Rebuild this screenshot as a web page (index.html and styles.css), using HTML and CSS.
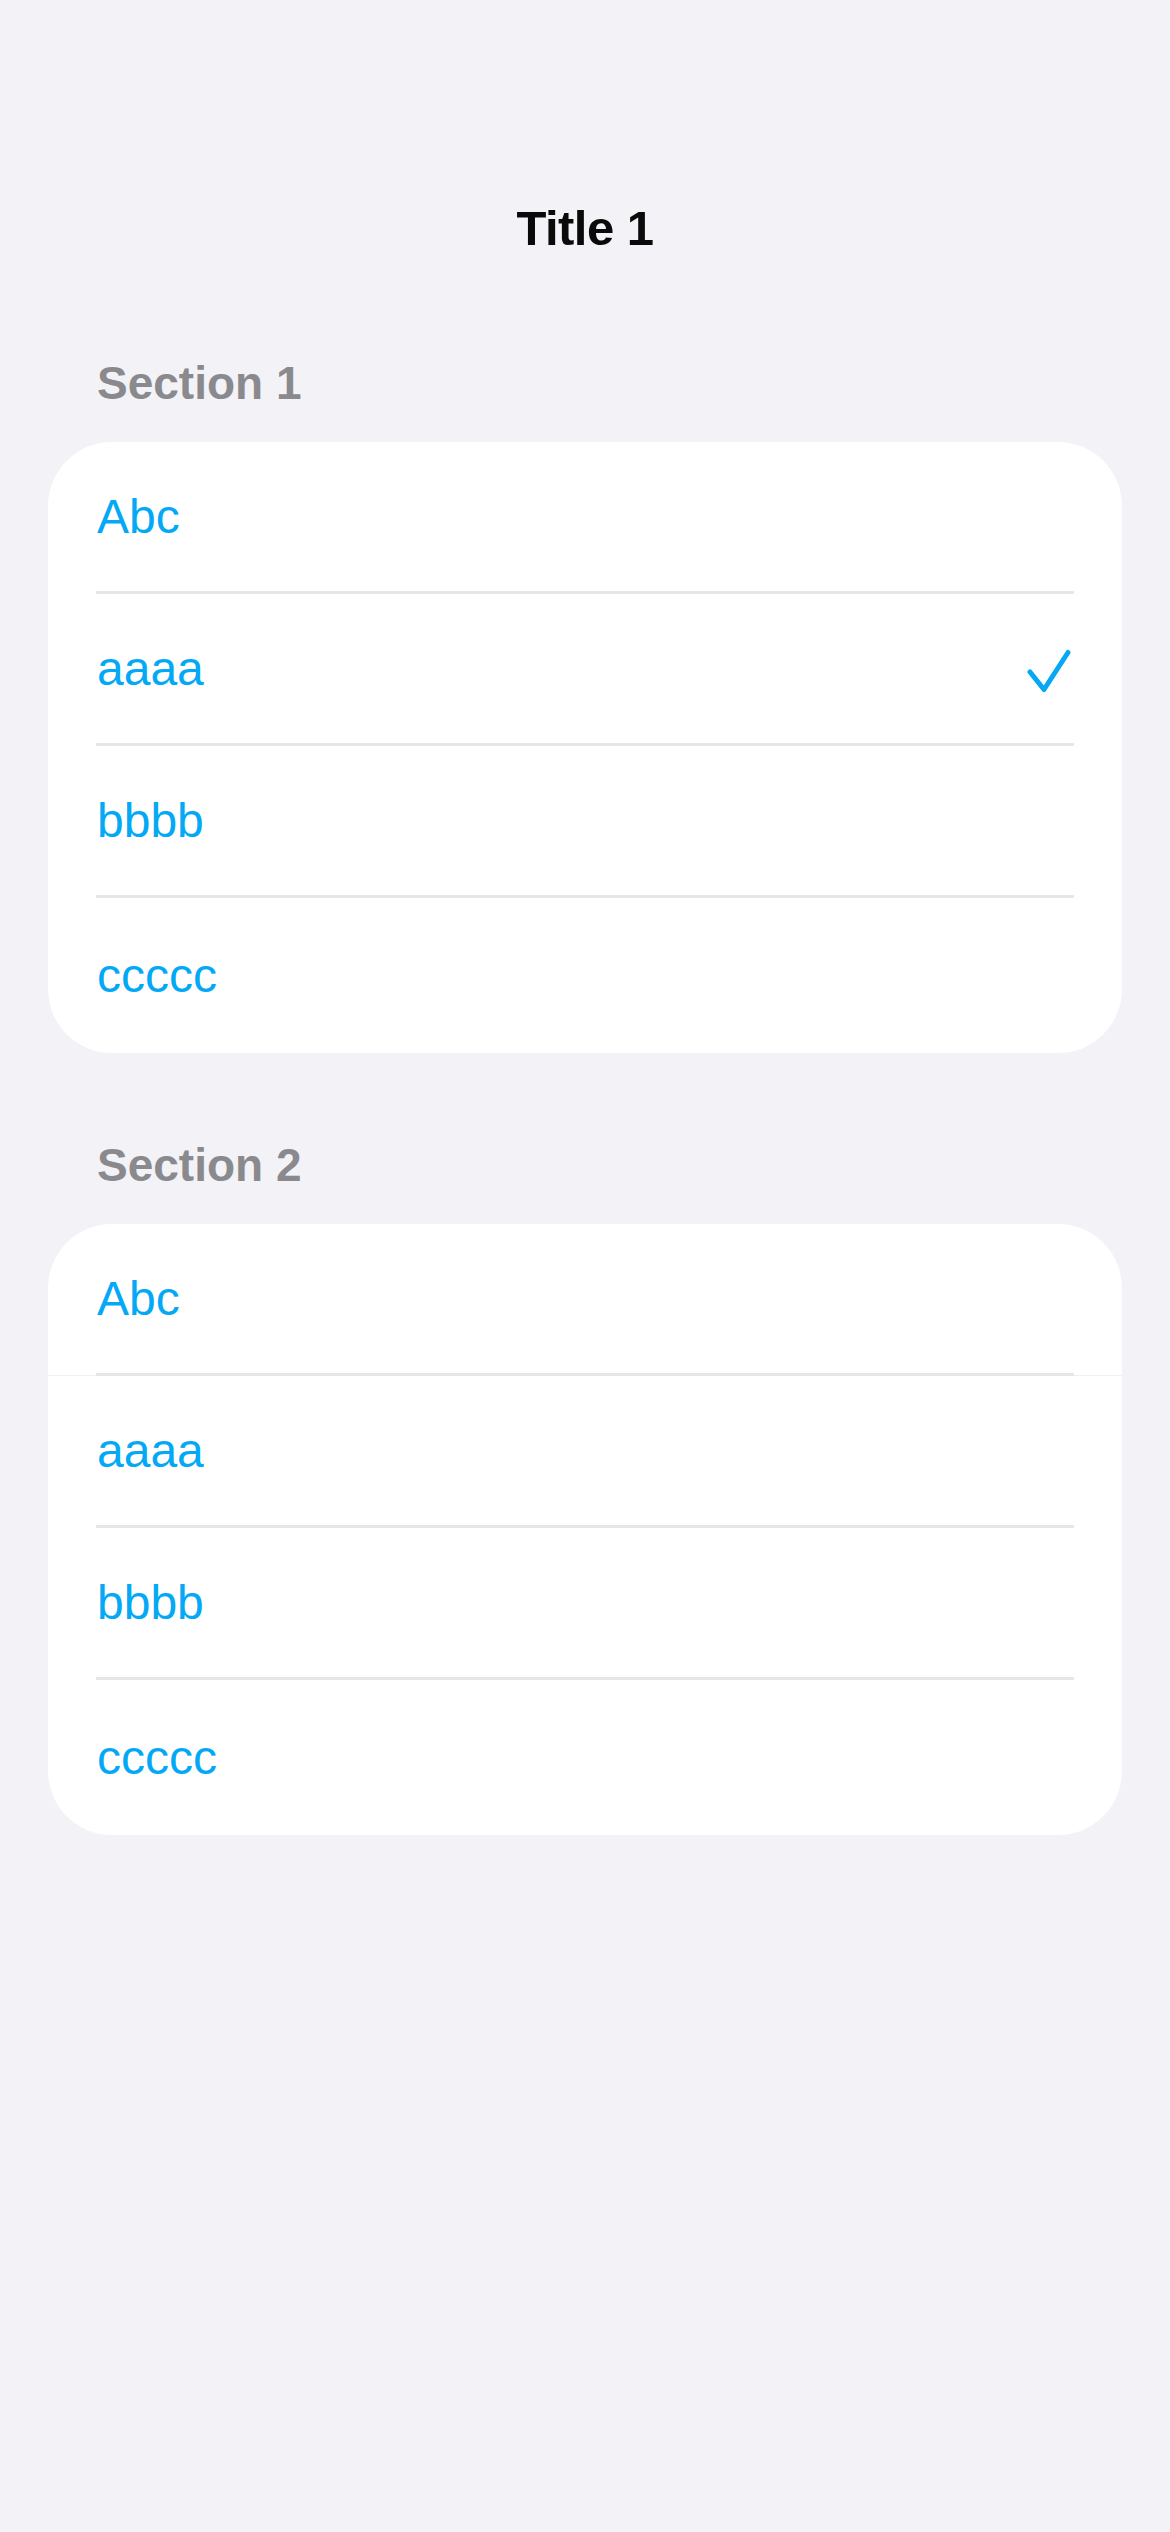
FILE: index.html
```html
<!DOCTYPE html>
<html lang="en">
<head>
<meta charset="utf-8">
<title>Title 1</title>
<link rel="stylesheet" href="styles.css">
</head>
<body>
<div class="screen">
  <header class="nav">
    <h1 class="nav-title">Title 1</h1>
  </header>

  <section class="group">
    <h2 class="group-header">Section 1</h2>
    <div class="card">
      <div class="row"><div class="row-inner"><span class="label">Abc</span></div></div>
      <div class="row"><div class="row-inner"><span class="label">aaaa</span>
        <svg class="check" width="50" height="48" viewBox="0 0 50 48" aria-hidden="true"><polyline points="6,27 20,44.5 44,7.5" fill="none" stroke="#03A9F4" stroke-width="5" stroke-linecap="round" stroke-linejoin="round"/></svg>
      </div></div>
      <div class="row"><div class="row-inner"><span class="label">bbbb</span></div></div>
      <div class="row"><div class="row-inner"><span class="label">ccccc</span></div></div>
    </div>
  </section>

  <section class="group">
    <h2 class="group-header">Section 2</h2>
    <div class="card">
      <div class="row pinned"><div class="row-inner"><span class="label">Abc</span></div></div>
      <div class="row"><div class="row-inner"><span class="label">aaaa</span></div></div>
      <div class="row"><div class="row-inner"><span class="label">bbbb</span></div></div>
      <div class="row"><div class="row-inner"><span class="label">ccccc</span></div></div>
    </div>
  </section>
</div>
</body>
</html>
```

FILE: styles.css
```css
html, body {
  margin: 0;
  padding: 0;
  background: #F2F2F7;
}

body {
  font-family: "Liberation Sans", Arial, sans-serif;
  min-height: 2532px;
}

.screen {
  display: flex;
  flex-direction: column;
  padding: 198px 48px 0 48px;
}

.nav {
  display: flex;
  justify-content: center;
}

.nav-title {
  margin: 0;
  font-size: 49px;
  line-height: 60px;
  font-weight: 700;
  letter-spacing: -0.5px;
  color: #0a0a0a;
}

.group {
  display: flex;
  flex-direction: column;
}

.group:first-of-type {
  margin-top: 97px;
}

.group + .group {
  margin-top: 84px;
}

.group-header {
  margin: 0 0 31px 0;
  padding-left: 49px;
  font-size: 46px;
  line-height: 56px;
  font-weight: 700;
  letter-spacing: 0;
  color: #8A8A8E;
}

.card {
  background: #ffffff;
  border-radius: 64px;
  overflow: hidden;
  display: flex;
  flex-direction: column;
}

.row {
  padding-left: 48px;
  position: relative;
}

.row-inner {
  height: 149px;
  margin-right: 48px;
  border-bottom: 3px solid #E6E6E8;
  display: flex;
  align-items: center;
  justify-content: space-between;
}

.row:last-child .row-inner {
  border-bottom: none;
  height: 155px;
}

.row.pinned {
  box-shadow: 0 -1px 0 #F1F1F3 inset;
}

.label {
  font-size: 48px;
  line-height: 56px;
  color: #03A9F4;
  padding-left: 1px;
}

.check {
  display: block;
  flex: none;
}
```
